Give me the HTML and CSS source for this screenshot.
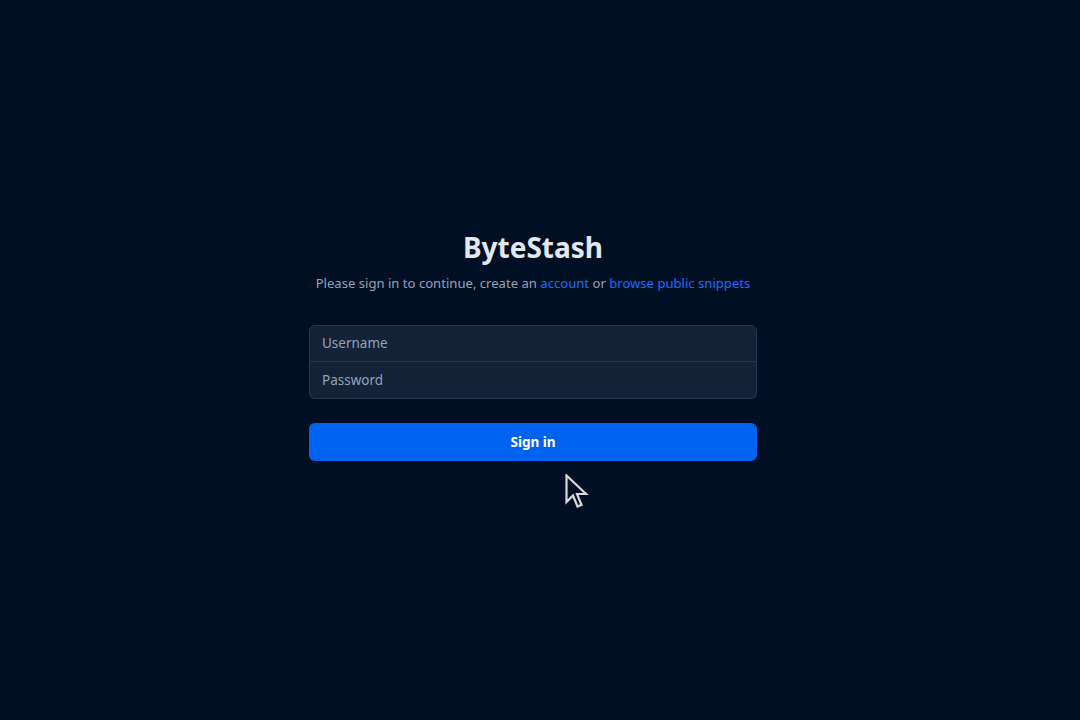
FILE: index.html
```html
<!DOCTYPE html>
<html lang="en">
<head>
<meta charset="utf-8">
<title>ByteStash</title>
<link rel="stylesheet" href="styles.css">
</head>
<body>
<main class="page">
  <div class="card">
    <h1 class="title">ByteStash</h1>
    <p class="subtitle">Please sign in to continue, create an <a href="#">account</a> or <a href="#">browse public snippets</a></p>
    <form class="form">
      <div class="fields">
        <input class="field field-top" type="text" placeholder="Username">
        <input class="field field-bottom" type="password" placeholder="Password">
      </div>
      <button class="btn" type="button">Sign in</button>
    </form>
  </div>
</main>
<svg class="cursor" width="24" height="36" viewBox="0 0 24 36">
  <path d="M1.5 1.5 L1.5 28 L8 21.5 L12.5 32.5 L16.5 30.8 L12 20 L21 20 Z" fill="#000f24" stroke="#d8d8d8" stroke-width="2.2" stroke-linejoin="miter"/>
</svg>
</body>
</html>
```

FILE: styles.css
```css
* { box-sizing: border-box; }
html, body {
  margin: 0;
  padding: 0;
  height: 100%;
  background: #000f24;
  font-family: "Noto Sans", "Open Sans", "Liberation Sans", sans-serif;
}
.page {
  min-height: 100vh;
  display: flex;
  align-items: center;
  justify-content: center;
  padding-bottom: 31px;
  padding-right: 14px;
}
.card {
  width: 448px;
}
.title {
  margin: 0;
  text-align: center;
  font-size: 28px;
  line-height: 36px;
  font-weight: 700;
  color: #e2e8f0;
}
.subtitle {
  margin: 8px 0 0;
  text-align: center;
  font-size: 13.1px;
  line-height: 20px;
  color: #94a3b8;
  white-space: nowrap;
}
.subtitle a {
  color: #1a6dff;
  text-decoration: none;
}
.form {
  margin-top: 32px;
}
.fields {
  display: flex;
  flex-direction: column;
}
.field {
  display: block;
  width: 100%;
  height: 37px;
  padding: 0 12px;
  background: #132237;
  border: 1px solid #27374d;
  color: #e2e8f0;
  font-family: inherit;
  font-size: 13.5px;
  outline: none;
}
.field::placeholder { color: #94a3b8; }
.field-top {
  border-radius: 6px 6px 0 0;
}
.field-bottom {
  border-top: none;
  border-radius: 0 0 6px 6px;
}
.btn {
  display: block;
  width: 100%;
  height: 38px;
  margin-top: 24px;
  border: none;
  border-radius: 6px;
  background: #0063ef;
  color: #ffffff;
  font-family: inherit;
  font-size: 13.5px;
  font-weight: 700;
  cursor: pointer;
}
.cursor {
  position: absolute;
  left: 565px;
  top: 474px;
}
```
